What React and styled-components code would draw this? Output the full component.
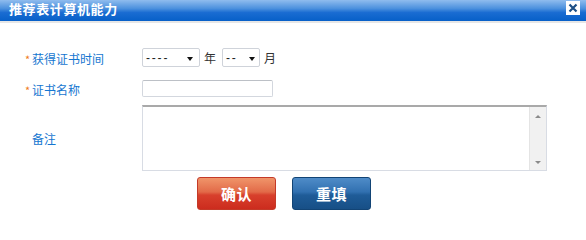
import React from "react";
import styled, { createGlobalStyle } from "styled-components";

const Global = createGlobalStyle`
  html, body { margin: 0; padding: 0; background: #fff; }
  body { font-family: "Noto Sans CJK SC", "Liberation Sans", sans-serif; font-size: 12px; }
`;

const Dialog = styled.div`
  width: 586px;
  height: 236px;
  background: #fff;
  display: flex;
  flex-direction: column;
`;

const TitleBar = styled.div`
  height: 21px;
  border-bottom: 2px solid #e6e6e6;
  background: linear-gradient(#8fbcee 0%, #4c91de 40%, #1a6cd2 60%, #0760c8 100%);
  display: flex;
  align-items: center;
  justify-content: space-between;
  padding: 0 6px 0 9px;
`;

const Title = styled.div`
  color: #fff;
  font-weight: bold;
  font-size: 13px;
  letter-spacing: 0.6px;
  line-height: 18px;
  margin-top: -4px;
`;

const Close = styled.div`
  width: 14px;
  height: 14px;
  background: #fff;
  display: flex;
  align-items: center;
  justify-content: center;
  margin-top: -5px;
`;

const Form = styled.div`
  display: flex;
  flex-direction: column;
  padding: 25px 0 0 25px;
`;

const Row = styled.div`
  display: flex;
  align-items: center;
  margin-top: ${(p) => p.$mt || 0}px;
`;

const Label = styled.div`
  width: 117px;
  color: #1576d0;
  font-size: 12px;
  line-height: 14px;
  display: flex;
  align-items: center;
  padding-top: 2px;
`;

const Star = styled.span`
  width: 7px;
  color: #f07a20;
  font-size: 11px;
`;

const Controls = styled.div`
  display: flex;
  align-items: center;
  gap: 4px;
  color: #333;
`;

const Select = styled.div`
  box-sizing: border-box;
  width: ${(p) => p.$w}px;
  height: 19px;
  border: 1px solid #cfd3da;
  border-radius: 2px;
  display: flex;
  align-items: center;
  justify-content: space-between;
  padding: 0 ${(p) => p.$pr}px 0 3px;
  font-family: "Liberation Sans", sans-serif;
  font-size: 12px;
  letter-spacing: 1.8px;
  color: #222;
`;

const Arrow = styled.span`
  width: 0;
  height: 0;
  border-left: 3.5px solid transparent;
  border-right: 3.5px solid transparent;
  border-top: 4px solid #111;
  margin-top: 2px;
`;

const Unit = styled.span`
  font-size: 12px;
  line-height: 14px;
  color: #333;
  margin-right: 2px;
`;

const TextInput = styled.div`
  box-sizing: border-box;
  width: 131px;
  height: 17px;
  border: 1px solid #d3d7de;
  border-top-color: #bcc0c6;
  border-radius: 2px;
`;

const TextArea = styled.div`
  box-sizing: border-box;
  width: 405px;
  height: 66px;
  border: 1px solid #d8dce4;
  border-top: 2px solid #a9a9a9;
  display: flex;
  justify-content: flex-end;
`;

const ScrollBar = styled.div`
  width: 16px;
  background: #f1f1f1;
  border-left: 1px solid #e4e4e4;
  display: flex;
  flex-direction: column;
  justify-content: space-between;
  align-items: center;
  padding: 8px 0 6px;
`;

const TinyUp = styled.span`
  width: 0;
  height: 0;
  border-left: 3px solid transparent;
  border-right: 3px solid transparent;
  border-bottom: 3px solid #8a8a8a;
`;

const TinyDown = styled.span`
  width: 0;
  height: 0;
  border-left: 3px solid transparent;
  border-right: 3px solid transparent;
  border-top: 3px solid #8a8a8a;
`;

const Buttons = styled.div`
  display: flex;
  gap: 16px;
  padding: 6px 0 0 197px;
`;

const Button = styled.div`
  box-sizing: border-box;
  width: 79px;
  height: 33px;
  border-radius: 3px;
  border: 1px solid ${(p) => (p.$red ? "#c43a28" : "#124475")};
  background: ${(p) =>
    p.$red
      ? "linear-gradient(#f0956a 0%, #e26a48 45%, #d8402c 55%, #cc2c1e 100%)"
      : "linear-gradient(#4f8cc8 0%, #3170b0 45%, #1f5c98 55%, #174f86 100%)"};
  color: #fff;
  font-weight: bold;
  font-size: 15px;
  display: flex;
  align-items: center;
  justify-content: center;
  letter-spacing: 0.5px;
`;

export default function App() {
  return (
    <>
      <Global />
      <Dialog>
        <TitleBar>
          <Title>推荐表计算机能力</Title>
          <Close>
            <svg width="10" height="10" viewBox="0 0 10 10">
              <path d="M1.5 1.5 L8.5 8.5 M8.5 1.5 L1.5 8.5" stroke="#1d4f86" strokeWidth="2.2" />
            </svg>
          </Close>
        </TitleBar>
        <Form>
          <Row>
            <Label>
              <Star>*</Star>获得证书时间
            </Label>
            <Controls>
              <Select $w={58} $pr={6}>
                ----<Arrow />
              </Select>
              <Unit>年</Unit>
              <Select $w={38} $pr={4}>
                --<Arrow />
              </Select>
              <Unit>月</Unit>
            </Controls>
          </Row>
          <Row $mt={13}>
            <Label>
              <Star>*</Star>证书名称
            </Label>
            <Controls>
              <TextInput />
            </Controls>
          </Row>
          <Row $mt={8}>
            <Label>
              <Star />备注
            </Label>
            <Controls>
              <TextArea>
                <ScrollBar>
                  <TinyUp />
                  <TinyDown />
                </ScrollBar>
              </TextArea>
            </Controls>
          </Row>
        </Form>
        <Buttons>
          <Button $red>确认</Button>
          <Button>重填</Button>
        </Buttons>
      </Dialog>
    </>
  );
}
